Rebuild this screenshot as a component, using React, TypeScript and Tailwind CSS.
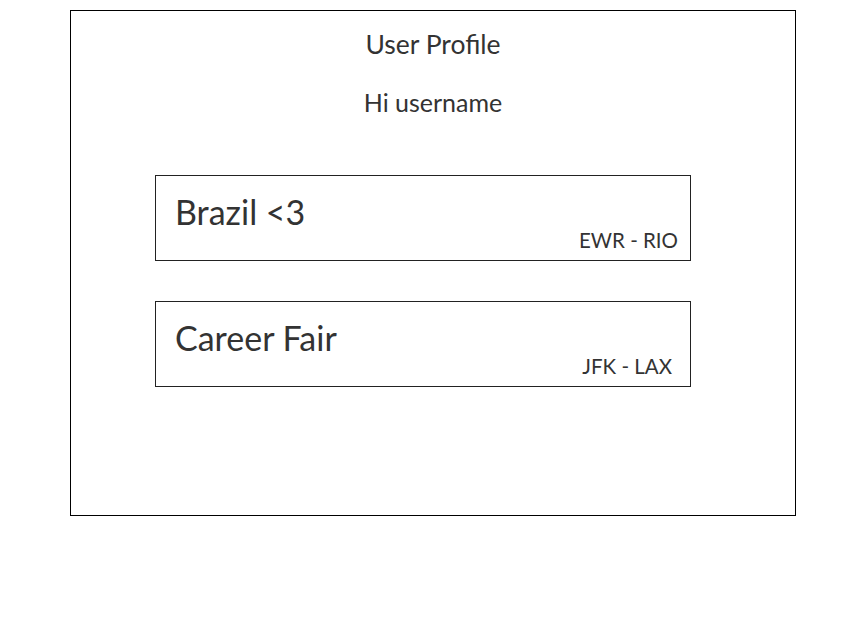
const trips = [
  { name: 'Brazil <3', route: 'EWR - RIO', pr: 'pr-[12px]' },
  { name: 'Career Fair', route: 'JFK - LAX', pr: 'pr-[18px]' },
];

export default function App() {
  return (
    <div className="w-[855px] h-[636px] bg-white pt-[10px] pl-[70px] font-['Lato',sans-serif] text-[#333]">
      <div className="w-[726px] h-[506px] border border-black">
        <h1 className="text-center text-[26.5px] leading-none mt-[20px]">User Profile</h1>
        <p className="text-center text-[25px] leading-none mt-[32px]">Hi username</p>
        <div className="ml-[84px] w-[536px] mt-[60px] flex flex-col gap-[40px]">
          {trips.map(t => (
            <div key={t.name} className={`h-[86px] border border-[#222] pl-[19px] ${t.pr} flex flex-col`}>
              <div className="text-[34px] leading-none mt-[19px]">{t.name}</div>
              <div className="text-[20.5px] leading-none text-right mt-[1px]">{t.route}</div>
            </div>
          ))}
        </div>
      </div>
    </div>
  );
}
